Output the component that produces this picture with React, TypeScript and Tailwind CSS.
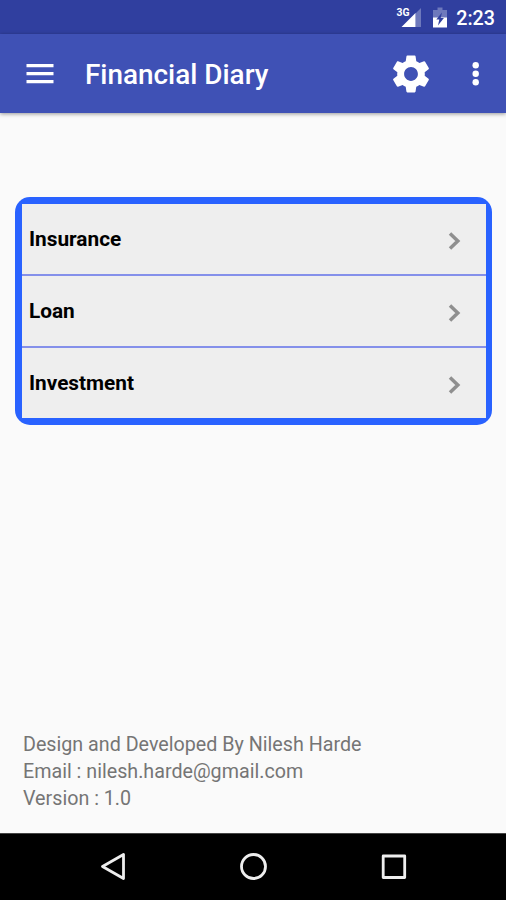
import { MdSettings } from 'react-icons/md'

const items = ['Insurance', 'Loan', 'Investment']

function StatusBar() {
  return (
    <div className="flex h-[34px] items-center justify-end bg-[#303f9f] pr-[11px] text-white">
      <svg className="mr-[10px] h-[24px] w-[27px]" viewBox="0 0 27 24">
        <path d="M26 3V22H20.500V8.500z" fill="currentColor" opacity="0.3" />
        <path d="M20.500 8V22H6.500z" fill="currentColor" />
        <text x="1.500" y="10.500" fontSize="11" fontWeight="700" fill="currentColor" textLength="13" lengthAdjust="spacingAndGlyphs">3G</text>
      </svg>
      <svg className="mr-[8px] h-[24px] w-[16px]" viewBox="0 0 16 24">
        <path d="M5.500 2.500h5V5H15v8H1V5h4.500z" fill="currentColor" opacity="0.3" />
        <path d="M1 12.500h14V22.500H1z" fill="currentColor" />
        <path d="M10 7.500 4.300 14.500h3L6 20.500l5.900-7.500H8.700z" fill="#303f9f" />
      </svg>
      <span className="mt-[4px] text-[19.700px] leading-[24px] font-medium">2:23</span>
    </div>
  )
}

function Toolbar() {
  return (
    <header className="relative flex h-[79px] items-center bg-[#3f51b5] pl-[26px] text-white shadow-[0_1px_4px_rgba(0,0,0,0.4)]">
      <button aria-label="Menu" className="mr-[32px]">
        <svg className="block h-[20px] w-[28px]" viewBox="0 0 28 20" fill="currentColor">
          <path d="M.5 0h27v3.200H.5zM.5 8h27v3.200H.5zM.5 16h27v3.200H.5z" />
        </svg>
      </button>
      <h1 className="mt-[3px] -ml-px flex-1 text-[27.900px] leading-[36px] font-medium whitespace-nowrap">Financial Diary</h1>
      <button aria-label="Settings" className="mr-[38px]">
        <MdSettings className="size-[46px]" />
      </button>
      <button aria-label="More options" className="mr-[27px]">
        <svg className="block h-[24px] w-[7px]" viewBox="0 0 7 24" fill="currentColor">
          <circle cx="3.700" cy="3.200" r="3.200" />
          <circle cx="3.700" cy="11.700" r="3.200" />
          <circle cx="3.700" cy="20.200" r="3.200" />
        </svg>
      </button>
    </header>
  )
}

function NavBar() {
  return (
    <nav className="flex h-[67px] items-center justify-between border-t border-[#444444] bg-black px-[99px] text-[#eeeeee]">
      <svg className="size-[28px]" viewBox="0 0 28 28" fill="none" stroke="currentColor" strokeWidth="2.800" strokeLinejoin="round">
        <path d="M24.500 1.500v24L3.500 13.500z" />
      </svg>
      <svg className="size-[28px]" viewBox="0 0 28 28" fill="none" stroke="currentColor" strokeWidth="2.800">
        <circle cx="14.500" cy="13.500" r="12" />
      </svg>
      <svg className="size-[28px]" viewBox="0 0 28 28" fill="none" stroke="currentColor" strokeWidth="2.800" strokeLinejoin="round">
        <rect x="4.200" y="3" width="21.500" height="21.500" />
      </svg>
    </nav>
  )
}

export default function App() {
  return (
    <div className="flex h-[900px] w-[506px] flex-col overflow-hidden bg-[#fafafa] font-[Roboto,sans-serif]">
      <StatusBar />
      <Toolbar />

      <main className="flex flex-1 flex-col pt-[84px]">
        {/* Category list */}
        <div className="mr-[14px] ml-[15px] rounded-[15px] bg-[#2962ff] pt-[7px] pr-[6px] pb-[7px] pl-[7px]">
          <ul className="bg-[#eeeeee]">
            {items.map((item) => (
              <li
                key={item}
                className="flex h-[72px] items-center justify-between border-b-2 border-[#8490ea] pr-[25px] pl-[7px] last:h-[70px] last:border-b-0"
              >
                <span className="text-[20.800px] leading-[24px] font-bold text-black">{item}</span>
                <svg className="mt-[4px] h-[20px] w-[13px]" viewBox="0 0 13 20" fill="none" stroke="#8f8f8f" strokeWidth="3.500">
                  <path d="M2 2.500 9.800 10 2 17.500" />
                </svg>
              </li>
            ))}
          </ul>
        </div>

        {/* Credits */}
        <footer className="mt-auto pb-[21px] pl-[23px] text-[19.700px] leading-[27px] text-[#757575]">
          <p>Design and Developed By Nilesh Harde</p>
          <p>Email : nilesh.harde@gmail.com</p>
          <p>Version : 1.0</p>
        </footer>
      </main>

      <NavBar />
    </div>
  )
}
